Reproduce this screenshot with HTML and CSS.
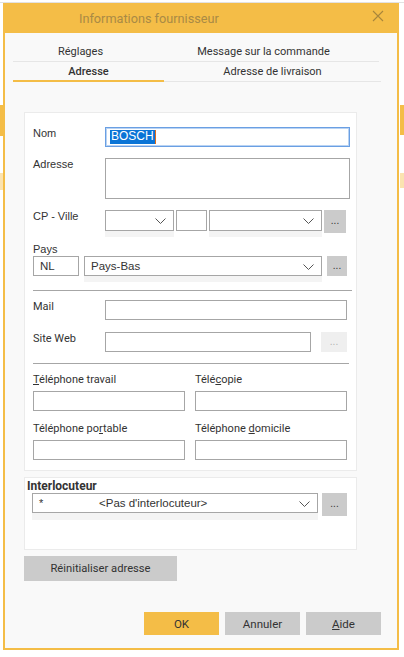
FILE: index.html
```html
<!DOCTYPE html>
<html lang="fr">
<head>
<meta charset="utf-8">
<title>Informations fournisseur</title>
<link rel="stylesheet" href="styles.css">
</head>
<body>
<div class="dialog">
  <div class="titlebar">
    <span class="title">Informations fournisseur</span>
    <svg class="close" width="12" height="12" viewBox="0 0 12 12"><path d="M1 1L11 11M11 1L1 11" stroke="#a8863c" stroke-width="1.1" fill="none"/></svg>
  </div>
  <div class="tabs">
    <div class="tabrow r1">
      <div class="tab">Réglages</div>
      <div class="tab grow">Message sur la commande</div>
    </div>
    <div class="tabrow r2">
      <div class="tab active">Adresse</div>
      <div class="tab grow">Adresse de livraison</div>
    </div>
  </div>

  <div class="card main">
    <div class="row r-nom">
      <div class="lbl">Nom</div>
      <div class="box focus w245"><span class="sel">BOSCH</span><span class="caret"></span></div>
    </div>
    <div class="row r-adr">
      <div class="lbl">Adresse</div>
      <div class="box area w245"></div>
    </div>
    <div class="row r-cp">
      <div class="lbl">CP - Ville</div>
      <div class="dd w69"><div class="box combo"><svg class="chev" width="11" height="6" viewBox="0 0 11 6"><path d="M0.5 0.5L5.5 5.5L10.5 0.5" stroke="#555" fill="none"/></svg></div></div>
      <div class="box w31 h21"></div>
      <div class="dd w113"><div class="box combo"><svg class="chev" width="11" height="6" viewBox="0 0 11 6"><path d="M0.5 0.5L5.5 5.5L10.5 0.5" stroke="#555" fill="none"/></svg></div></div>
      <div class="btn-dots b22">...</div>
    </div>
    <div class="lbl solo">Pays</div>
    <div class="row r-pays">
      <div class="box w46 txt">NL</div>
      <div class="dd w238"><div class="box combo txt">Pays-Bas<svg class="chev" width="11" height="6" viewBox="0 0 11 6"><path d="M0.5 0.5L5.5 5.5L10.5 0.5" stroke="#555" fill="none"/></svg></div></div>
      <div class="btn-dots b20">...</div>
    </div>
    <div class="sep s1"></div>
    <div class="row r-mail">
      <div class="lbl alt">Mail</div>
      <div class="box w242"></div>
    </div>
    <div class="row r-web">
      <div class="lbl alt">Site Web</div>
      <div class="box w206"></div>
      <div class="btn-dots disabled b26">...</div>
    </div>
    <div class="sep s2"></div>
    <div class="grid2 g1">
      <div class="lbl alt"><u>T</u>éléphone travail</div>
      <div class="lbl alt">Télé<u>c</u>opie</div>
      <div class="box"></div>
      <div class="box"></div>
    </div>
    <div class="grid2 g2">
      <div class="lbl alt">Téléphone po<u>r</u>table</div>
      <div class="lbl alt">Téléphone <u>d</u>omicile</div>
      <div class="box"></div>
      <div class="box"></div>
    </div>
  </div>

  <div class="card inter">
    <div class="inter-lbl">Interlocuteur</div>
    <div class="row r-inter">
      <div class="dd w286"><div class="box combo txt"><span class="star">*</span><span class="none">&lt;Pas d'interlocuteur&gt;</span><svg class="chev" width="11" height="6" viewBox="0 0 11 6"><path d="M0.5 0.5L5.5 5.5L10.5 0.5" stroke="#555" fill="none"/></svg></div></div>
      <div class="btn-dots b25">...</div>
    </div>
  </div>

  <div class="reset">Réinitialiser adresse</div>

  <div class="footer">
    <div class="fbtn ok">OK</div>
    <div class="fbtn">Annuler</div>
    <div class="fbtn"><u>A</u>ide</div>
  </div>
</div>
</body>
</html>
```

FILE: styles.css
```css
* { box-sizing: border-box; }
html, body { margin: 0; }
body {
  width: 404px;
  height: 657px;
  overflow: hidden;
  padding: 3px 0 0 3px;
  font-family: "Liberation Sans", Arial, sans-serif;
  font-size: 11px;
  color: #333;
  background:
    linear-gradient(#f4bd47, #f4bd47) 0 105px / 3px 31px no-repeat,
    linear-gradient(#f4bd47, #f4bd47) 400px 105px / 4px 30px no-repeat,
    linear-gradient(#fbe3b0, #fbe3b0) 0 173px / 3px 17px no-repeat,
    linear-gradient(#fbe3b0, #fbe3b0) 400px 173px / 4px 15px no-repeat,
    linear-gradient(#e2e2e2, #e2e2e2) 0 2px / 100% 1px no-repeat,
    #ffffff;
}
.dialog {
  width: 396px;
  height: 647px;
  background: #f9f9f9;
  border: 2px solid #f4bd47;
  border-top: 0;
  display: flex;
  flex-direction: column;
}
.titlebar {
  height: 30px;
  margin: 0 -2px;
  background: #f4bd47;
  display: flex;
  align-items: center;
  padding-left: 76px;
  padding-right: 15px;
}
.title {
  font-family: Roboto, sans-serif;
  font-size: 12.7px;
  color: #a98a45;
  flex: 1;
  padding-top: 1px;
}
.close { margin-top: -4px; }

.tabs {
  margin: 8px 16px 0 8px;
  font-family: Roboto, sans-serif;
  font-size: 11px;
  color: #333;
}
.tabrow {
  display: flex;
  height: 20px;
}
.tabrow.r1 { height: 21px; border-bottom: 1px solid #e6e6e6; margin-right: 2px; }
.tabrow.r2 { border-bottom: 1px solid #e6e6e6; }
.tab {
  display: flex;
  align-items: center;
  justify-content: center;
  padding-bottom: 0;
}
.r1 .tab:first-child { width: 135px; }
.r2 .tab:first-child { width: 151px; }
.tab.grow { flex: 1; }
.tab.active {
  font-weight: 500;
  border-bottom: 2px solid #f4bd47;
  margin-bottom: -1px;
  padding-bottom: 0;
}

.card {
  margin-left: 19px;
  width: 333px;
  background: #fff;
  border: 1px solid #ebebeb;
}
.card.main {
  margin-top: 30px;
  padding: 14px 0 10px 8px;
}
.row { display: flex; align-items: flex-start; }
.lbl {
  width: 72px;
  line-height: 13px;
  color: #333;
}
.lbl.alt { font-family: Roboto, sans-serif; font-size: 11px; }
.lbl.solo { width: auto; margin-top: 6px; }
.box {
  height: 20px;
  border: 1px solid #a6a6a6;
  background: #fff;
  position: relative;
}
.box.txt {
  display: flex;
  align-items: center;
  padding-left: 6px;
  font-size: 11.5px;
  color: #333;
}
.w245 { width: 245px; }
.w242 { width: 242px; }
.w206 { width: 206px; }
.w46 { width: 46px; }
.w31 { width: 31px; margin: 0 2px; }
.h21 { height: 21px; }
.box.area { height: 41px; }
.box.focus {
  border-color: #6a9fe3;
  box-shadow: inset 0 0 0 1px #b9d3f3;
  padding: 2px 0 0 4px;
  display: flex;
}
.sel {
  background: #0a74d6;
  color: #fff;
  font-size: 12px;
  line-height: 13px;
  height: 14px;
  padding: 0 1px;
}
.caret { width: 1px; height: 14px; background: #e06c1a; }

.r-adr, .r-cp { margin-top: 11px; }
.dd { background: #f4f4f4; padding-bottom: 6px; }
.dd .box.combo { height: 21px; }
.w69 { width: 69px; }
.w113 { width: 113px; }
.w238 { width: 238px; margin-left: 5px; }
.w238 .box.combo, .w286 .box.combo { height: 20px; }
.w286 { width: 286px; }
.chev { position: absolute; right: 7px; top: 7px; }

.btn-dots {
  height: 23px;
  background: #cbcbcb;
  display: flex;
  align-items: center;
  justify-content: center;
  font-size: 10px;
  color: #333;
  padding-bottom: 2px;
}
.b22 { width: 22px; margin-left: 2px; }
.b20 { width: 20px; height: 20px; margin-left: 5px; }
.b26 { width: 26px; height: 20px; margin-left: 10px; }
.b25 { width: 25px; margin-left: 4px; }
.btn-dots.disabled { background: #efefef; color: #b3b3b3; }

.sep { height: 1px; background: #a6a6a6; }
.s1 { margin-top: 8px; width: 319px; }
.s2 { margin-top: 11px; width: 316px; }
.r-mail { margin-top: 9px; }
.r-web { margin-top: 12px; }

.grid2 {
  display: grid;
  grid-template-columns: 152px 152px;
  column-gap: 10px;
  row-gap: 5px;
}
.grid2 .lbl { width: auto; }
.g1 { margin-top: 9px; }
.g2 { margin-top: 11px; }
u { text-decoration-thickness: 1px; text-underline-offset: 1px; }

.card.inter {
  margin-top: 6px;
  height: 73px;
  padding: 1px 0 0 2px;
}
.inter-lbl {
  font-family: Roboto, sans-serif;
  font-weight: 700;
  font-size: 12px;
  line-height: 14px;
  color: #333;
}
.r-inter { margin-left: 5px; }
.r-inter .dd { padding-bottom: 7px; }
.star { width: 60px; font-size: 11px; }
.none { font-size: 11.5px; }

.reset {
  margin: 6px 0 0 19px;
  width: 153px;
  height: 25px;
  background: #cbcbcb;
  display: flex;
  align-items: center;
  justify-content: center;
  font-family: Roboto, sans-serif;
  font-size: 11.2px;
  color: #333;
}
.footer {
  margin: 31px 0 0 139px;
  display: flex;
  gap: 6px;
}
.fbtn {
  width: 75px;
  height: 23px;
  background: #cbcbcb;
  display: flex;
  align-items: center;
  justify-content: center;
  font-family: Roboto, sans-serif;
  font-size: 11.5px;
  color: #333;
}
.fbtn.ok { background: #f4bd47; }
```
